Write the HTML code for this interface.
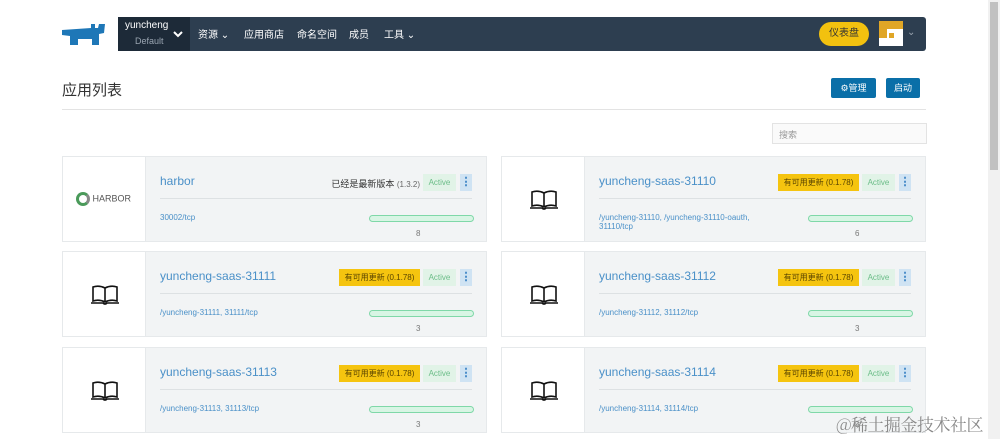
<!DOCTYPE html>
<html><head><meta charset="utf-8"><style>
*{box-sizing:border-box;margin:0;padding:0}
body{width:1000px;height:439px;overflow:hidden;background:#fff;font-family:"Liberation Sans","Noto Sans CJK SC",sans-serif;position:relative;color:#333}
.a{position:absolute}
.nav{left:118px;top:17px;width:808px;height:34px;background:#2d3e50;border-radius:0 3px 3px 0}
.proj{left:118px;top:17px;width:72px;height:34px;background:#1d2a38}
.nt{color:#fff;font-size:10px;top:26px}
.card{width:425px;height:86px;background:#f2f4f5;border:1px solid #e6e9eb}
.card .ic{position:absolute;left:0;top:0;width:83px;height:84px;background:#fff;border-right:1px solid #e6e9eb}
.card .t{position:absolute;left:97px;top:17px;font-size:12px;color:#4a90c8}
.card .sep{position:absolute;left:97px;right:14px;top:41px;height:1px;background:#dde1e3}
.card .p{position:absolute;left:97px;top:56px;font-size:8px;color:#4a90c8;line-height:9px}
.card .bar{position:absolute;left:306px;top:58px;width:105px;height:7px;border:1px solid #7fd8a8;background:#d8f5e4;border-radius:4px}
.card .n{position:absolute;left:353px;top:72px;font-size:8px;color:#777}
.card .act{position:absolute;right:30px;top:17px;height:17px;width:33px;background:#e1f3e7;color:#6bbd88;font-size:8px;text-align:center;line-height:17px}
.card .dots{position:absolute;right:14px;top:17px;width:12px;height:17px;background:#cfe3f3;color:#2d7ac0;font-size:11px;text-align:center;line-height:16px;font-weight:bold}
.card .up{position:absolute;right:66px;top:17px;height:17px;width:81px;background:#f5c40f;color:#5a4500;font-size:8px;line-height:17px;text-align:center}
.book{position:absolute;left:28px;top:33px}
</style></head><body>
<svg class="a" style="left:61px;top:22px" width="46" height="24" viewBox="0 0 46 24"><path d="M1 8 L30 6 L30 2 L34 2 L34 6 L37 6 L38 2 L44 2 L43 11 L38 12 L38 23 L31 23 L31 17 L17 17 L17 23 L9 23 L9 14 L1 13 Z" fill="#1e77b7"/></svg>
<div class="a nav"></div><div class="a proj"></div>
<div class="a" style="left:125px;top:20px;color:#fff;font-size:10px">yuncheng</div>
<div class="a" style="left:135px;top:36px;color:#9aa5b1;font-size:9px">Default</div>
<svg class="a" style="left:173px;top:31px" width="10" height="7"><path d="M1 1 L5 5 L9 1" stroke="#fff" stroke-width="2" fill="none"/></svg>
<div class="a nt" style="left:198px">资源 ⌄</div>
<div class="a nt" style="left:244px">应用商店</div>
<div class="a nt" style="left:297px">命名空间</div>
<div class="a nt" style="left:349px">成员</div>
<div class="a nt" style="left:384px">工具 ⌄</div>
<div class="a" style="left:819px;top:22px;width:50px;height:24px;background:#f2c10f;border-radius:12px;font-size:10px;color:#333;text-align:center;line-height:24px">仪表盘</div>
<div class="a" style="left:879px;top:21px;width:24px;height:25px;background:#e0a626"><div class="a" style="left:8px;top:8px;width:16px;height:17px;background:#fff"></div><div class="a" style="left:0;top:17px;width:8px;height:8px;background:#fff"></div><div class="a" style="left:10px;top:12px;width:5px;height:5px;background:#e0a626"></div></div>
<div class="a" style="left:907px;top:27px;color:#9aa5b1;font-size:10px">⌄</div>
<div class="a" style="left:62px;top:79px;font-size:15px;color:#333">应用列表</div>
<div class="a" style="left:62px;top:109px;width:864px;height:1px;background:#e3e3e3"></div>
<div class="a" style="left:831px;top:78px;width:45px;height:20px;background:#0a6fa8;color:#fff;font-size:9px;text-align:center;line-height:20px;border-radius:2px">⚙管理</div>
<div class="a" style="left:886px;top:78px;width:34px;height:20px;background:#0a6fa8;color:#fff;font-size:9px;text-align:center;line-height:20px;border-radius:2px">启动</div>
<div class="a" style="left:772px;top:123px;width:155px;height:21px;border:1px solid #e3e3e3;background:#fafafa;font-size:9px;color:#999;padding:4px 6px">搜索</div>

<div class="a card" style="left:62px;top:156px"><div class="ic"><div style="position:absolute;left:13px;top:35px;font-size:9px;color:#555"><span style="display:inline-block;width:14px;height:14px;border-radius:50%;border:3px solid #4a9a5a;border-right-color:#888;vertical-align:middle"></span> HARBOR</div></div><div class="t">harbor</div><div style="position:absolute;right:66px;top:20px;font-size:9px;color:#333">已经是最新版本 <span style="color:#666;font-size:8px">(1.3.2)</span></div><div class="act">Active</div><div class="dots">⋮</div><div class="sep"></div><div class="p">30002/tcp</div><div class="bar"></div><div class="n">8</div></div>

<div class="a card" style="left:501px;top:156px"><div class="ic"><svg class="book" width="28" height="20" viewBox="0 0 28 20"><path d="M14 3 Q8 0 2 2 L2 16 Q8 14 14 17 Q20 14 26 16 L26 2 Q20 0 14 3 Z M14 3 L14 17 M0 18 L12 18 Q14 20 16 18 L28 18" stroke="#111" stroke-width="1.6" fill="none"/></svg></div><div class="t">yuncheng-saas-31110</div><div class="up">有可用更新 (0.1.78)</div><div class="act">Active</div><div class="dots">⋮</div><div class="sep"></div><div class="p">/yuncheng-31110, /yuncheng-31110-oauth,<br>31110/tcp</div><div class="bar"></div><div class="n">6</div></div>

<div class="a card" style="left:62px;top:251px"><div class="ic"><svg class="book" width="28" height="20" viewBox="0 0 28 20"><path d="M14 3 Q8 0 2 2 L2 16 Q8 14 14 17 Q20 14 26 16 L26 2 Q20 0 14 3 Z M14 3 L14 17 M0 18 L12 18 Q14 20 16 18 L28 18" stroke="#111" stroke-width="1.6" fill="none"/></svg></div><div class="t">yuncheng-saas-31111</div><div class="up">有可用更新 (0.1.78)</div><div class="act">Active</div><div class="dots">⋮</div><div class="sep"></div><div class="p">/yuncheng-31111, 31111/tcp</div><div class="bar"></div><div class="n">3</div></div>

<div class="a card" style="left:501px;top:251px"><div class="ic"><svg class="book" width="28" height="20" viewBox="0 0 28 20"><path d="M14 3 Q8 0 2 2 L2 16 Q8 14 14 17 Q20 14 26 16 L26 2 Q20 0 14 3 Z M14 3 L14 17 M0 18 L12 18 Q14 20 16 18 L28 18" stroke="#111" stroke-width="1.6" fill="none"/></svg></div><div class="t">yuncheng-saas-31112</div><div class="up">有可用更新 (0.1.78)</div><div class="act">Active</div><div class="dots">⋮</div><div class="sep"></div><div class="p">/yuncheng-31112, 31112/tcp</div><div class="bar"></div><div class="n">3</div></div>

<div class="a card" style="left:62px;top:347px"><div class="ic"><svg class="book" width="28" height="20" viewBox="0 0 28 20"><path d="M14 3 Q8 0 2 2 L2 16 Q8 14 14 17 Q20 14 26 16 L26 2 Q20 0 14 3 Z M14 3 L14 17 M0 18 L12 18 Q14 20 16 18 L28 18" stroke="#111" stroke-width="1.6" fill="none"/></svg></div><div class="t">yuncheng-saas-31113</div><div class="up">有可用更新 (0.1.78)</div><div class="act">Active</div><div class="dots">⋮</div><div class="sep"></div><div class="p">/yuncheng-31113, 31113/tcp</div><div class="bar"></div><div class="n">3</div></div>

<div class="a card" style="left:501px;top:347px"><div class="ic"><svg class="book" width="28" height="20" viewBox="0 0 28 20"><path d="M14 3 Q8 0 2 2 L2 16 Q8 14 14 17 Q20 14 26 16 L26 2 Q20 0 14 3 Z M14 3 L14 17 M0 18 L12 18 Q14 20 16 18 L28 18" stroke="#111" stroke-width="1.6" fill="none"/></svg></div><div class="t">yuncheng-saas-31114</div><div class="up">有可用更新 (0.1.78)</div><div class="act">Active</div><div class="dots">⋮</div><div class="sep"></div><div class="p">/yuncheng-31114, 31114/tcp</div><div class="bar"></div><div class="n">3</div></div>

<div class="a" style="left:836px;top:411px;font-size:17px;color:#888;font-family:'Noto Serif CJK SC',serif;letter-spacing:-0.5px">@稀土掘金技术社区</div>
<div class="a" style="left:988px;top:0;width:12px;height:439px;background:#f1f1f1"></div>
<div class="a" style="left:990px;top:2px;width:8px;height:168px;background:#c1c1c1"></div>
</body></html>
